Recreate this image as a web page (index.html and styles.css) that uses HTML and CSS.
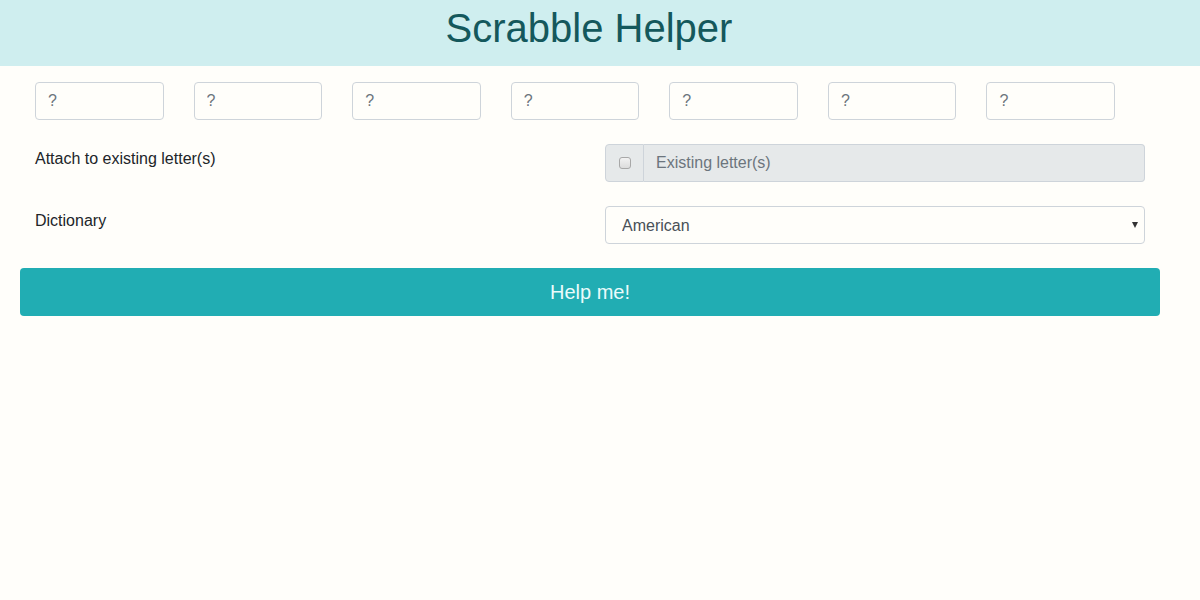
FILE: index.html
```html
<!DOCTYPE html>
<html lang="en">
<head>
<meta charset="utf-8">
<title>Scrabble Helper</title>
<link rel="stylesheet" href="styles.css">
</head>
<body>
<header class="header">
  <h1 class="title">Scrabble Helper</h1>
</header>
<main class="container">
  <div class="tiles">
    <div class="tile-cell"><input class="field tile" type="text" placeholder="?"></div>
    <div class="tile-cell"><input class="field tile" type="text" placeholder="?"></div>
    <div class="tile-cell"><input class="field tile" type="text" placeholder="?"></div>
    <div class="tile-cell"><input class="field tile" type="text" placeholder="?"></div>
    <div class="tile-cell"><input class="field tile" type="text" placeholder="?"></div>
    <div class="tile-cell"><input class="field tile" type="text" placeholder="?"></div>
    <div class="tile-cell"><input class="field tile" type="text" placeholder="?"></div>
  </div>
  <div class="form-row">
    <label class="form-label">Attach to existing letter(s)</label>
    <div class="form-control-col">
      <div class="input-group">
        <span class="addon"><input class="check" type="checkbox"></span>
        <input class="field grouped" type="text" placeholder="Existing letter(s)" disabled>
      </div>
    </div>
  </div>
  <div class="form-row">
    <label class="form-label">Dictionary</label>
    <div class="form-control-col">
      <div class="select-wrap">
        <select class="field select">
          <option>American</option>
          <option>British</option>
        </select>
      </div>
    </div>
  </div>
  <button class="btn" type="button">Help me!</button>
</main>
</body>
</html>
```

FILE: styles.css
```css
* { box-sizing: border-box; }
html, body {
  margin: 0;
  padding: 0;
  background: #fffefa;
  font-family: "Liberation Sans", Arial, sans-serif;
  font-size: 16px;
  color: #212529;
}
.header {
  background: #cfeeef;
  height: 66px;
  padding-top: 4px;
}
.title {
  margin: 0;
  text-align: center;
  font-weight: 400;
  font-size: 40px;
  line-height: 48px;
  color: #14585c;
  padding-left: 0;
  padding-right: 22px;
}
.container {
  width: 1140px;
  margin-left: 20px;
  padding-top: 16px;
}
.tiles {
  display: flex;
  padding: 0 15px;
  margin-bottom: 24px;
}
.tile-cell {
  flex: 1 1 0;
  padding-right: 30px;
}
.field {
  font-family: "Liberation Sans", Arial, sans-serif;
  font-size: 16px;
  color: #495057;
  height: 38px;
  border: 1px solid #ced4da;
  border-radius: 4px;
  background: #fffefa;
  padding: 6px 12px;
  outline: none;
}
.field::placeholder { color: #6c757d; opacity: 1; }
.tile { width: 100%; }
.form-row {
  display: flex;
  margin-bottom: 24px;
}
.form-label {
  flex: 0 0 570px;
  padding: 3px 15px 0;
  line-height: 24px;
  color: #212529;
}
.form-control-col {
  flex: 0 0 570px;
  padding: 0 15px;
}
.input-group {
  display: flex;
  height: 38px;
}
.addon {
  display: flex;
  align-items: center;
  justify-content: center;
  width: 39px;
  background: #e6e9ea;
  border: 1px solid #ced4da;
  border-right: 1px solid #ced4da;
  border-radius: 4px 0 0 4px;
}
.check {
  appearance: none;
  -webkit-appearance: none;
  width: 12px;
  height: 12px;
  margin: 0;
  border: 1px solid #a8a8a8;
  border-radius: 3px;
  background: linear-gradient(#f2f2f2, #dcdcdc);
}
.grouped {
  flex: 1 1 auto;
  border-left: none;
  border-radius: 0 4px 4px 0;
  background: #e6e9ea;
}
.select-wrap {
  position: relative;
}
.select-wrap::after {
  content: "";
  position: absolute;
  right: 7px;
  top: 16px;
  border-left: 3px solid transparent;
  border-right: 3px solid transparent;
  border-top: 6px solid #333;
}
.select {
  width: 100%;
  appearance: none;
  -webkit-appearance: none;
  padding-left: 16px;
  color: #495057;
  background: #fffefa;
}
.btn {
  display: block;
  width: 1140px;
  height: 48px;
  border: none;
  border-radius: 4px;
  background: #21adb3;
  color: #eafbfb;
  font-family: "Liberation Sans", Arial, sans-serif;
  font-size: 20px;
  cursor: pointer;
}
```
